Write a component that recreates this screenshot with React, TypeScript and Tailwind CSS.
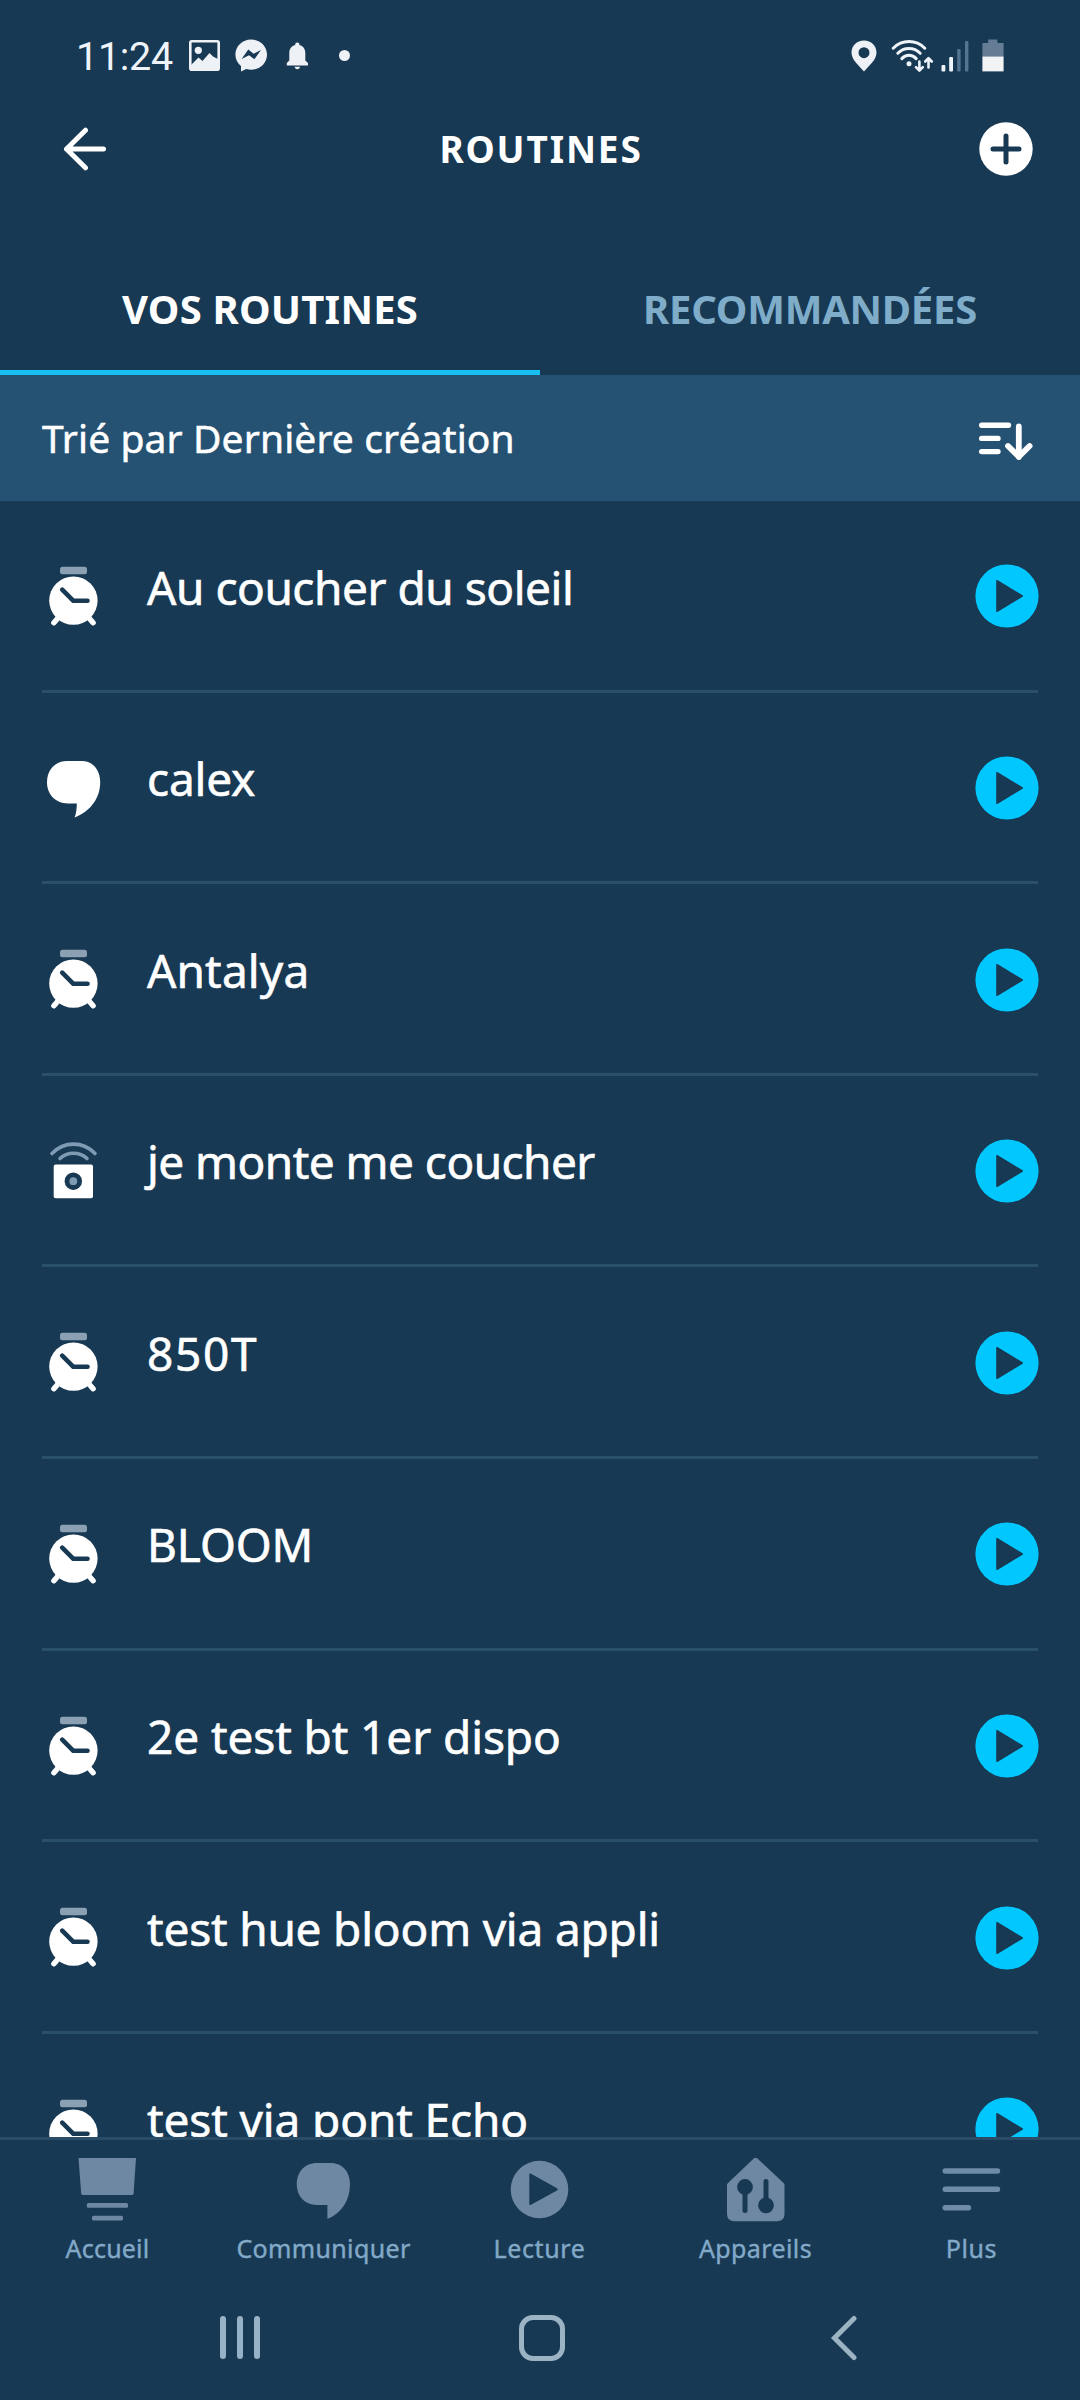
import React from 'react';

type IconName = 'alarm' | 'voice' | 'button';

const routines: { name: string; icon: IconName; tracking: string }[] = [
  { name: 'Au coucher du soleil', icon: 'alarm', tracking: 'tracking-[-0.46px]' },
  { name: 'calex', icon: 'voice', tracking: 'tracking-[-0.2px]' },
  { name: 'Antalya', icon: 'alarm', tracking: 'tracking-[0.15px]' },
  { name: 'je monte me coucher', icon: 'button', tracking: 'tracking-[-0.55px]' },
  { name: '850T', icon: 'alarm', tracking: 'tracking-[1.7px]' },
  { name: 'BLOOM', icon: 'alarm', tracking: 'tracking-[-0.1px]' },
  { name: '2e test bt 1er dispo', icon: 'alarm', tracking: 'tracking-[-0.1px]' },
  { name: 'test hue bloom via appli', icon: 'alarm', tracking: 'tracking-[-0.2px]' },
  { name: 'test via pont Echo', icon: 'alarm', tracking: 'tracking-[-0.12px]' },
];

function AlarmIcon() {
  return (
    <svg width="58" height="66" viewBox="0 0 58 66" fill="none" strokeLinecap="round" strokeLinejoin="round">
      <rect x="15" y="4.7" width="27" height="7.6" rx="2.5" fill="#8ba0b3" />
      <path d="M13 56 8.9 60.8M44 56l4.1 4.8" stroke="#fff" strokeWidth="5.4" />
      <circle cx="28.4" cy="38.6" r="24.2" fill="#fff" />
      <path d="M17.2 27.7 28.4 38.8H42.5" stroke="#183953" strokeWidth="4.6" />
    </svg>
  );
}

function VoiceIcon() {
  return (
    <svg width="58" height="66" viewBox="0 0 58 66">
      <path
        d="M22 7H37C48 7 55.2 16 55.2 28 55.2 44 46 57 29.6 63.5 31.3 59 31.8 54 31.8 49.4H23C10 49.4 2 40 2 28.3 2 16 10 7 22 7Z"
        fill="#fff"
      />
    </svg>
  );
}

function ButtonIcon() {
  return (
    <svg width="58" height="66" viewBox="0 0 58 66" fill="none" strokeLinecap="round">
      <path d="M7 16.5C19 4 38 4 50 16.5" stroke="#7f9bb3" strokeWidth="3.6" />
      <path d="M15 21.5C22 14.5 35 14.5 42 21.5" stroke="#7f9bb3" strokeWidth="3.6" />
      <rect x="8.7" y="27.4" width="39.3" height="33.8" rx="2" fill="#fff" />
      <circle cx="28.3" cy="44.2" r="8.7" fill="#183953" />
      <circle cx="28.3" cy="44.2" r="3.9" fill="#7f9bb3" />
    </svg>
  );
}

function PlayIcon() {
  return (
    <svg width="64" height="64" viewBox="0 0 64 64">
      <circle cx="32" cy="32" r="31.6" fill="#00c8ff" />
      <path d="M22 16.8 47.2 32 22 47.2Z" fill="#183953" stroke="#183953" strokeWidth="1.6" strokeLinejoin="round" />
    </svg>
  );
}

const icons: Record<IconName, () => React.ReactElement> = {
  alarm: AlarmIcon,
  voice: VoiceIcon,
  button: ButtonIcon,
};

function StatusBar() {
  return (
    <div className="flex h-[111px] items-center justify-between pl-[76px] pr-[76px]">
      <div className="flex items-center">
        <span className="w-[112.5px] pt-[3px] font-['Roboto',sans-serif] text-[39.5px] leading-[40px] tracking-[-0.3px] text-[#eef4fa]">
          11:24
        </span>
        <svg width="31" height="31" viewBox="0 0 31 31">
          <rect x="1.3" y="1.3" width="28.4" height="28.4" rx="1.5" fill="none" stroke="#eef2f7" strokeWidth="2.6" />
          <circle cx="9.3" cy="10.3" r="3.6" fill="#eef2f7" />
          <path d="M2 25 9.5 17.5 13.5 21 20.5 13 24 16.5 29 19V29H2Z" fill="#eef2f7" />
        </svg>
        <svg width="33" height="33" viewBox="0 0 33 33" className="ml-[15.5px]">
          <path
            d="M16.2 0.4C7.4 0.4 0.4 7 0.4 15.6 0.4 20.4 2.6 24.4 6 27.1V32.6L11.2 30.1C12.8 30.6 14.5 30.8 16.2 30.8 25 30.8 32 24.2 32 15.6 32 7 25 0.4 16.2 0.4Z"
            fill="#eef2f7"
          />
          <path d="M6.6 20 13.3 10.6 18.6 14.8 26 11 19.4 20.3 14 16.2Z" fill="#183953" />
        </svg>
        <svg width="23" height="28" viewBox="0 0 23 28" className="ml-[18px]">
          <path
            d="M11.3 0.4C10 0.4 9.2 1.2 9.2 2.4V3.1C5.4 4 3.3 7.2 3.3 11V18.4L0.8 21V23.4H22V21L19.3 18.4V11C19.3 7.2 17.2 4 13.4 3.1V2.4C13.4 1.2 12.6 0.4 11.3 0.4ZM8.6 24.8C8.8 26.4 9.9 27.3 11.3 27.3S13.8 26.4 14 24.8Z"
            fill="#eef2f7"
          />
        </svg>
        <span className="ml-[30px] size-[11px] rounded-full bg-[#eef2f7]" />
      </div>
      <div className="flex items-center">
        <svg width="26" height="32" viewBox="0 0 26 32">
          <path
            fillRule="evenodd"
            d="M13 0.5C5.8 0.5 0.5 5.8 0.5 12.6 0.5 20.5 8.5 26 13 31.6 17.5 26 25.5 20.5 25.5 12.6 25.5 5.8 20.2 0.5 13 0.5ZM13 7.2A5.5 5.5 0 1 1 13 18.2 5.5 5.5 0 0 1 13 7.2Z"
            fill="#eef2f7"
          />
        </svg>
        <svg width="44" height="34" viewBox="0 0 44 34" className="ml-[13px]" fill="none" stroke="#eef4fa" strokeLinecap="round" strokeLinejoin="round">
          <g strokeWidth="3">
            <path d="M3.2 9.2C12 0.3 26 0.3 34.8 9.2" />
            <path d="M7.8 14.3C14 8 24 8 30.2 14.3" />
            <path d="M11.8 19.6C16 15.2 22 15.2 26.2 19.6" />
          </g>
          <circle cx="19" cy="24.8" r="2.5" fill="#eef4fa" stroke="none" />
          <path d="M29.4 22.5V31M26 28.2l3.4 3.4 3.4-3.4" strokeWidth="2.6" />
          <path d="M38.5 28.5V19.5M35.2 22.5l3.3-3.4 3.3 3.4" strokeWidth="2.6" />
        </svg>
        <svg width="29" height="32" viewBox="0 0 29 32" className="ml-[7px]">
          <rect x="0.5" y="25" width="3.8" height="6.4" rx="1" fill="#eef4fa" />
          <rect x="8.2" y="17" width="3.8" height="14.4" rx="1" fill="#eef4fa" />
          <rect x="16.2" y="9" width="3.4" height="22.4" rx="1" fill="#547591" />
          <rect x="24" y="1" width="3.4" height="30.4" rx="1" fill="#547591" />
        </svg>
        <svg width="22" height="33" viewBox="0 0 22 33" className="ml-3">
          <path d="M6.2 0.6H15.4V4H21.6V18H0.4V4H6.2Z" fill="#657d94" />
          <rect x="0.4" y="17.6" width="21.2" height="14.8" fill="#f1f3f5" />
        </svg>
      </div>
    </div>
  );
}

function Header() {
  return (
    <header className="grid h-[75px] grid-cols-[1fr_auto_1fr] items-center pl-[62px] pr-[47px]">
      <svg width="46" height="44" viewBox="0 0 46 44" fill="none" stroke="#fff" strokeWidth="5" strokeLinecap="round" strokeLinejoin="round">
        <path d="M41.5 22H4.5M23.5 3.2 4.5 22 23.5 40.8" />
      </svg>
      <h1 className="mr-[13px] text-[37px] font-bold leading-[50px] tracking-[1.85px]">ROUTINES</h1>
      <svg width="54" height="54" viewBox="0 0 54 54" strokeLinecap="round" className="justify-self-end">
        <circle cx="27" cy="27" r="26.7" fill="#fff" />
        <path d="M27 14V40M14 27H40" stroke="#183953" strokeWidth="5" />
      </svg>
    </header>
  );
}

const navIcons = {
  home: (
    <>
      <path d="M2.5 6H60L57.6 41.5Q57.4 43 56 43H7Q5.4 43 5.2 41.5Z" />
      <rect x="10.8" y="51" width="41.2" height="4.8" rx="1.5" />
      <rect x="16" y="63.7" width="31" height="4.8" rx="1.5" />
    </>
  ),
  chat: (
    <path d="M25 11H39C50.5 11 58 20 58 32 58 48 50 61 35.4 67V53H25C12.5 53 4.8 44 4.8 32.3 4.8 20 12.5 11 25 11Z" />
  ),
  play: (
    <path
      fillRule="evenodd"
      d="M31.5 8.7A28.8 28.8 0 1 1 31.5 66.3 28.8 28.8 0 0 1 31.5 8.7ZM23 21.8C22 21.2 21.3 21.6 21.3 22.8V51.8C21.3 53 22 53.4 23 52.8L49 38.4C50 37.8 50 36.8 49 36.2Z"
    />
  ),
  devices: (
    <>
      <path d="M30 6.3Q31.6 5 33.2 6.3L59.6 31Q60.5 32 60.5 33V62Q60.5 69.3 53 69.3H10.5Q3 69.3 3 62V33Q3 32 4 31Z" />
      <g stroke="#183953" strokeWidth="5" strokeLinecap="round" fill="#183953">
        <path d="M21 38V58.5M42 52V29.5" />
        <circle cx="21" cy="35" r="5.4" />
        <circle cx="42" cy="53.3" r="5.4" />
      </g>
    </>
  ),
  more: (
    <path d="M5.2 19H57.5M5.2 37.2H57.5M5.2 55.7H28.5" fill="none" stroke="#6e8ba8" strokeWidth="5.4" strokeLinecap="round" />
  ),
};

const navItems: { label: string; icon: keyof typeof navIcons; tracking: string }[] = [
  { label: 'Accueil', icon: 'home', tracking: 'tracking-[0.2px]' },
  { label: 'Communiquer', icon: 'chat', tracking: 'tracking-[0.36px]' },
  { label: 'Lecture', icon: 'play', tracking: 'tracking-[0.6px]' },
  { label: 'Appareils', icon: 'devices', tracking: 'tracking-[0.4px]' },
  { label: 'Plus', icon: 'more', tracking: 'tracking-[0.6px]' },
];

export default function App() {
  return (
    <div className="flex h-[2400px] w-[1080px] flex-col overflow-hidden bg-[#183953] font-['Noto_Sans','Open_Sans',sans-serif] text-white">
      <StatusBar />
      <Header />

      <div className="grid h-[189px] grid-cols-2 text-center text-[40px] font-bold leading-[54px]">
        <div className="border-b-[5px] border-[#18bff5] pt-[95.5px] tracking-[0.22px]">VOS ROUTINES</div>
        <div className="pt-[95.5px] tracking-[-0.25px] text-[#7fadc9]">RECOMMANDÉES</div>
      </div>

      <div className="flex h-[126px] items-center justify-between bg-[#255273] pl-[42px] pr-[45px]">
        <span className="text-[39px] leading-[52px] tracking-[0.1px] [-webkit-text-stroke:0.5px_#fff]">Trié par Dernière création</span>
        <svg width="58" height="42" viewBox="0 0 58 42" fill="none" stroke="#fff" strokeWidth="5.4" strokeLinecap="round" strokeLinejoin="round" className="mt-1">
          <path d="M4.7 6.3H31.5M4.7 19.4H21M4.7 32.6H21" />
          <path d="M41.8 7.3V38M31 27 41.8 37.6 52.6 27" strokeWidth="5.8" />
        </svg>
      </div>

      <ul className="min-h-0 flex-1 overflow-hidden">
        {routines.map(({ name, icon, tracking }) => {
          const Icon = icons[icon];
          return (
            <li key={name} className="mx-[42px] flex h-[191.6px] items-start border-b-[3px] border-[#2a5069]">
              <div className="ml-[3px] mt-[61px] w-[102px]">
                <Icon />
              </div>
              <span
                className={`mt-[55.5px] flex-1 whitespace-nowrap text-[46px] leading-[60px] [-webkit-text-stroke:0.6px_#fff] ${tracking}`}
              >
                {name}
              </span>
              <button className="mr-[-1px] mt-[63.4px]" aria-label={`Lancer ${name}`}>
                <PlayIcon />
              </button>
            </li>
          );
        })}
      </ul>

      <nav className="grid h-[143px] grid-cols-5 border-t-[3px] border-[#2b4c67] pt-3">
        {navItems.map(({ label, icon, tracking }) => (
          <div key={label} className="flex flex-col items-center">
            <svg width="64" height="72" viewBox="0 0 64 72" fill="#6e87a3">
              {navIcons[icon]}
            </svg>
            <span
              className={`mr-px mt-[8.5px] text-[25px] leading-[30px] text-[#82a9c8] [-webkit-text-stroke:0.4px_#82a9c8] ${tracking}`}
            >
              {label}
            </span>
          </div>
        ))}
      </nav>

      <div className="flex h-[120px] items-center justify-between pb-[5px] pl-[220px] pr-[222px]">
        <div className="flex gap-[11.5px]">
          <span className="h-[43px] w-[5.5px] rounded-full bg-[#97b1c6]" />
          <span className="h-[43px] w-[5.5px] rounded-full bg-[#97b1c6]" />
          <span className="h-[43px] w-[5.5px] rounded-full bg-[#97b1c6]" />
        </div>
        <span className="mr-[5px] h-[46px] w-[46px] rounded-[14px] border-[5px] border-[#9cb3c3]" />
        <svg width="28" height="46" viewBox="0 0 28 46" fill="none" stroke="#9cb3c3" strokeWidth="5" strokeLinecap="round" strokeLinejoin="miter">
          <path d="M24 3.5 4.5 23 24 42.5" />
        </svg>
      </div>
    </div>
  );
}
